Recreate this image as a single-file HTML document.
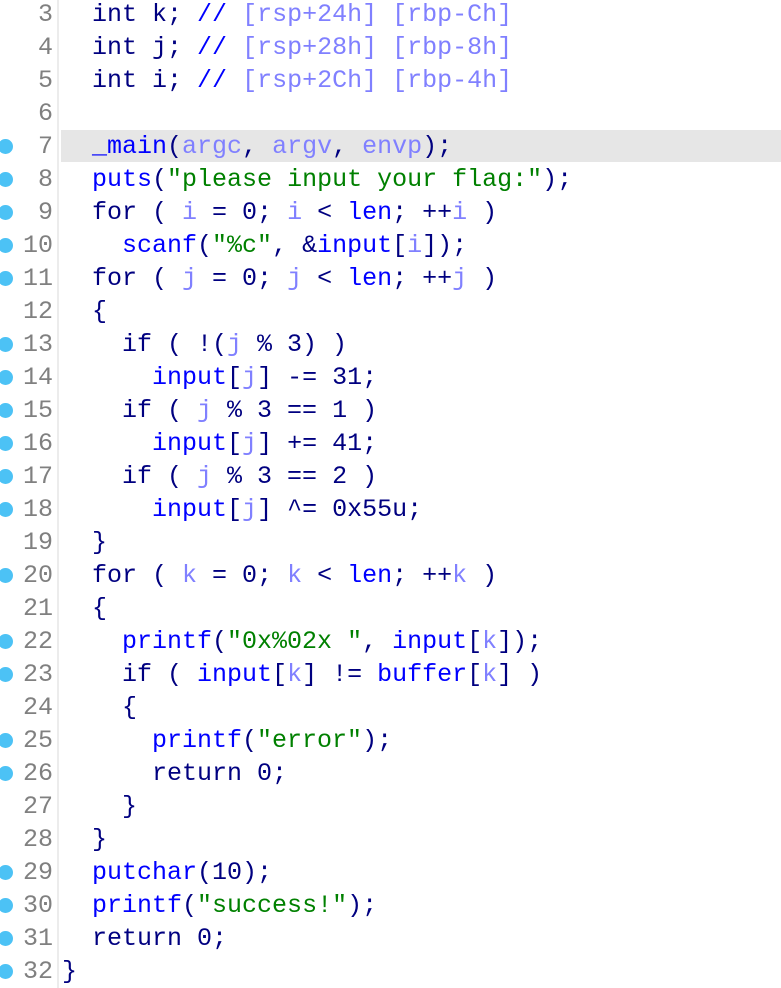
<!DOCTYPE html>
<html><head><meta charset="utf-8"><style>
html,body{margin:0;padding:0;background:#fff;width:781px;height:988px;overflow:hidden;position:relative}
.l{position:absolute;left:0;height:33px;width:781px;font-family:"Liberation Mono","DejaVu Sans Mono",monospace;font-size:25px;line-height:33px;white-space:pre}
.num{position:absolute;right:728px;top:0;color:#808080;text-align:right}
.c{position:absolute;left:62px;top:0;color:#000080}
.d{position:absolute;left:-2px;top:9px;width:15px;height:15px;border-radius:50%;background:#4cc2f5}
.g{position:absolute;left:57px;top:0;width:2px;height:988px;background:#ececec}
.f{color:#0000ff}.v{color:#8080ff}.s{color:#008000}
</style></head><body>
<div class="g"></div>
<div class="l" style="top:-2px"><span class="num">3</span><span class="c">  int k; <span class="f">//</span> <span class="v">[rsp+24h] [rbp-Ch]</span></span></div>
<div class="l" style="top:31px"><span class="num">4</span><span class="c">  int j; <span class="f">//</span> <span class="v">[rsp+28h] [rbp-8h]</span></span></div>
<div class="l" style="top:64px"><span class="num">5</span><span class="c">  int i; <span class="f">//</span> <span class="v">[rsp+2Ch] [rbp-4h]</span></span></div>
<div class="l" style="top:97px"><span class="num">6</span></div>
<div class="l" style="top:130px"><div style="position:absolute;left:61px;top:0;right:0;height:32px;background:#e6e6e6"></div><span class="d"></span><span class="num">7</span><span class="c">  <span class="f">_main</span>(<span class="v">argc</span>, <span class="v">argv</span>, <span class="v">envp</span>);</span></div>
<div class="l" style="top:163px"><span class="d"></span><span class="num">8</span><span class="c">  <span class="f">puts</span>(<span class="s">"please input your flag:"</span>);</span></div>
<div class="l" style="top:196px"><span class="d"></span><span class="num">9</span><span class="c">  for ( <span class="v">i</span> = 0; <span class="v">i</span> &lt; <span class="f">len</span>; ++<span class="v">i</span> )</span></div>
<div class="l" style="top:229px"><span class="d"></span><span class="num">10</span><span class="c">    <span class="f">scanf</span>(<span class="s">"%c"</span>, &amp;<span class="f">input</span>[<span class="v">i</span>]);</span></div>
<div class="l" style="top:262px"><span class="d"></span><span class="num">11</span><span class="c">  for ( <span class="v">j</span> = 0; <span class="v">j</span> &lt; <span class="f">len</span>; ++<span class="v">j</span> )</span></div>
<div class="l" style="top:295px"><span class="num">12</span><span class="c">  {</span></div>
<div class="l" style="top:328px"><span class="d"></span><span class="num">13</span><span class="c">    if ( !(<span class="v">j</span> % 3) )</span></div>
<div class="l" style="top:361px"><span class="d"></span><span class="num">14</span><span class="c">      <span class="f">input</span>[<span class="v">j</span>] -= 31;</span></div>
<div class="l" style="top:394px"><span class="d"></span><span class="num">15</span><span class="c">    if ( <span class="v">j</span> % 3 == 1 )</span></div>
<div class="l" style="top:427px"><span class="d"></span><span class="num">16</span><span class="c">      <span class="f">input</span>[<span class="v">j</span>] += 41;</span></div>
<div class="l" style="top:460px"><span class="d"></span><span class="num">17</span><span class="c">    if ( <span class="v">j</span> % 3 == 2 )</span></div>
<div class="l" style="top:493px"><span class="d"></span><span class="num">18</span><span class="c">      <span class="f">input</span>[<span class="v">j</span>] ^= 0x55u;</span></div>
<div class="l" style="top:526px"><span class="num">19</span><span class="c">  }</span></div>
<div class="l" style="top:559px"><span class="d"></span><span class="num">20</span><span class="c">  for ( <span class="v">k</span> = 0; <span class="v">k</span> &lt; <span class="f">len</span>; ++<span class="v">k</span> )</span></div>
<div class="l" style="top:592px"><span class="num">21</span><span class="c">  {</span></div>
<div class="l" style="top:625px"><span class="d"></span><span class="num">22</span><span class="c">    <span class="f">printf</span>(<span class="s">"0x%02x "</span>, <span class="f">input</span>[<span class="v">k</span>]);</span></div>
<div class="l" style="top:658px"><span class="d"></span><span class="num">23</span><span class="c">    if ( <span class="f">input</span>[<span class="v">k</span>] != <span class="f">buffer</span>[<span class="v">k</span>] )</span></div>
<div class="l" style="top:691px"><span class="num">24</span><span class="c">    {</span></div>
<div class="l" style="top:724px"><span class="d"></span><span class="num">25</span><span class="c">      <span class="f">printf</span>(<span class="s">"error"</span>);</span></div>
<div class="l" style="top:757px"><span class="d"></span><span class="num">26</span><span class="c">      return 0;</span></div>
<div class="l" style="top:790px"><span class="num">27</span><span class="c">    }</span></div>
<div class="l" style="top:823px"><span class="num">28</span><span class="c">  }</span></div>
<div class="l" style="top:856px"><span class="d"></span><span class="num">29</span><span class="c">  <span class="f">putchar</span>(10);</span></div>
<div class="l" style="top:889px"><span class="d"></span><span class="num">30</span><span class="c">  <span class="f">printf</span>(<span class="s">"success!"</span>);</span></div>
<div class="l" style="top:922px"><span class="d"></span><span class="num">31</span><span class="c">  return 0;</span></div>
<div class="l" style="top:955px"><span class="d"></span><span class="num">32</span><span class="c">}</span></div>
</body></html>
